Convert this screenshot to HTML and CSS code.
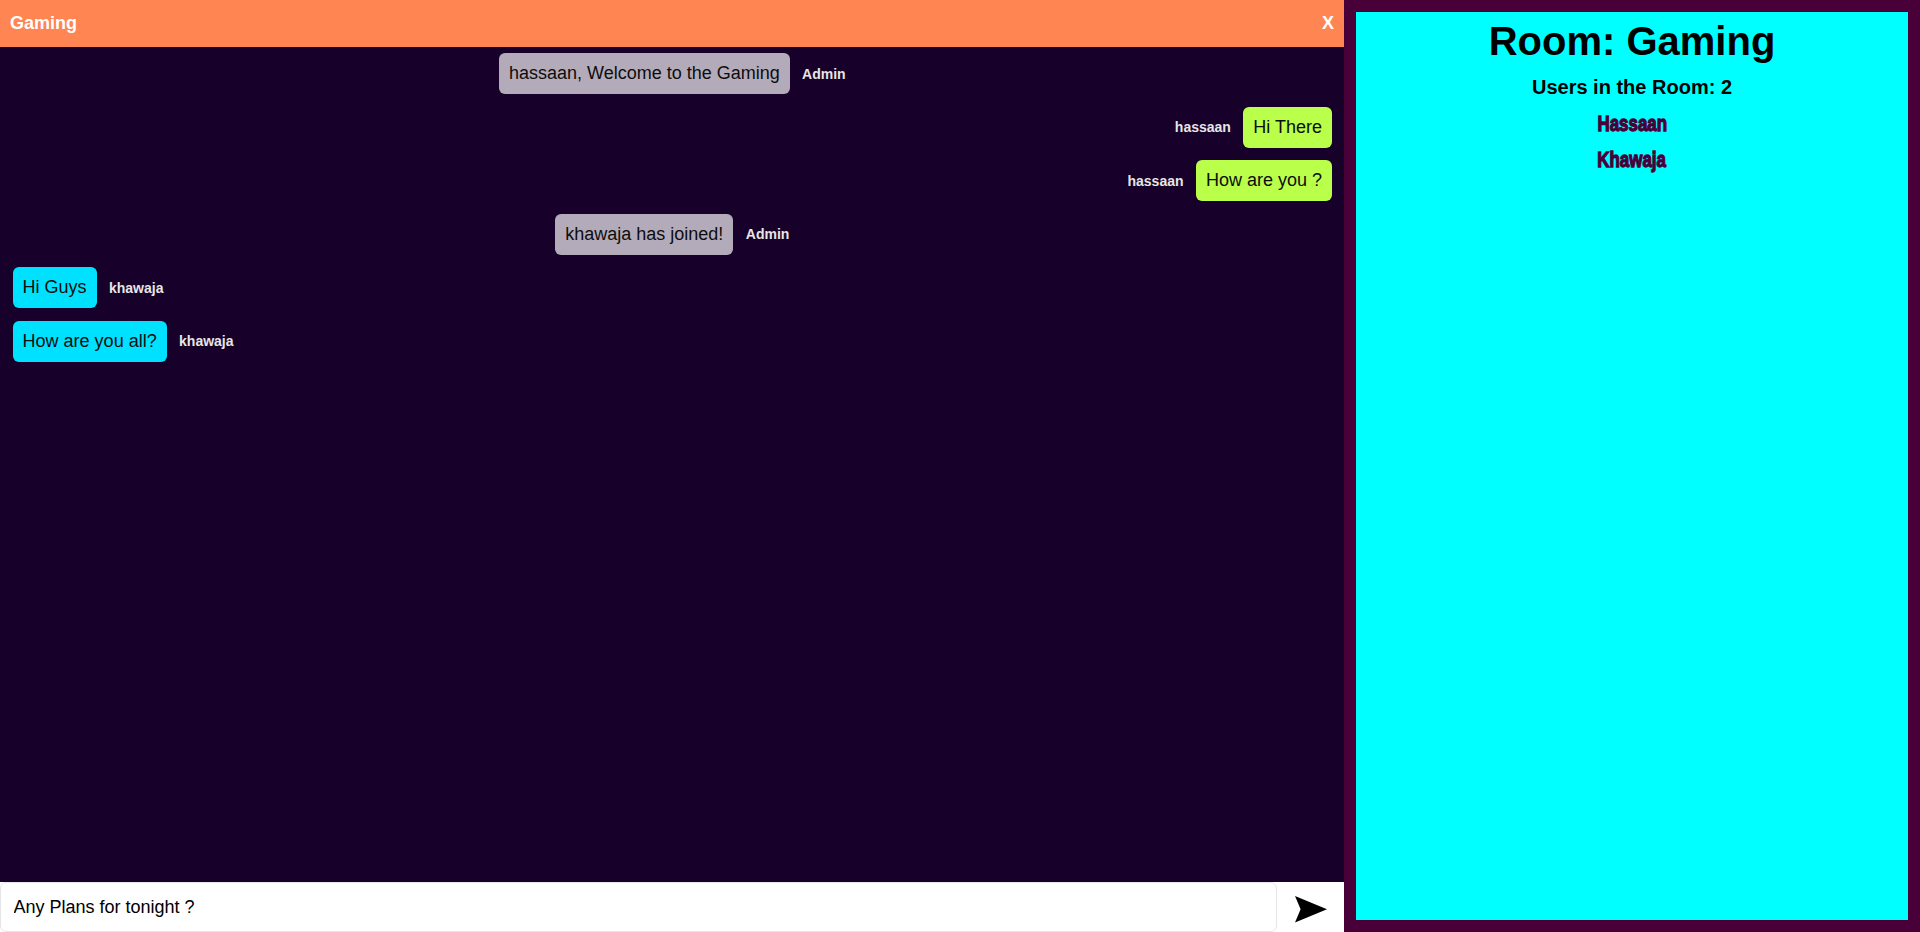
FILE: index.html
```html
<!DOCTYPE html>
<html lang="en">
<head>
<meta charset="utf-8">
<title>Chat Room</title>
<link rel="stylesheet" href="styles.css">
</head>
<body>
<div class="app">
  <main class="chat">
    <header class="chat-header"><span>Gaming</span><span class="close">X</span></header>
    <div class="messages">
      <div class="message center"><p class="bubble admin">hassaan, Welcome to the Gaming</p><span class="sender">Admin</span></div>
      <div class="message end"><span class="sender">hassaan</span><p class="bubble own">Hi There</p></div>
      <div class="message end"><span class="sender">hassaan</span><p class="bubble own">How are you ?</p></div>
      <div class="message center"><p class="bubble admin">khawaja has joined!</p><span class="sender">Admin</span></div>
      <div class="message"><p class="bubble other">Hi Guys</p><span class="sender">khawaja</span></div>
      <div class="message"><p class="bubble other">How are you all?</p><span class="sender">khawaja</span></div>
    </div>
    <form class="composer">
      <input class="composer-input" type="text" value="Any Plans for tonight ?">
      <button class="send" type="button" aria-label="Send">
        <svg width="32" height="27" viewBox="0 0 32 27"><path d="M0 0 32 13.2 0 26.5 5.6 13.2Z"/></svg>
      </button>
    </form>
  </main>
  <aside class="sidebar">
    <div class="panel">
      <h1 class="room">Room: Gaming</h1>
      <h2 class="count">Users in the Room: 2</h2>
      <p class="user">Hassaan</p>
      <p class="user">Khawaja</p>
    </div>
  </aside>
</div>
</body>
</html>
```
FILE: styles.css
```css
* { box-sizing: border-box; margin: 0; padding: 0; }
body { font-family: "Liberation Sans", Arial, sans-serif; }
.app { display: flex; height: 100vh; overflow: hidden; }
.chat { width: 70%; display: flex; flex-direction: column; background: #170029; }
.chat-header {
  display: flex; justify-content: space-between; align-items: center;
  height: 47px; padding: 0 10px;
  background: #ff8552; color: #fff; font-size: 18px; font-weight: bold;
}
.messages {
  flex: 1; display: flex; flex-direction: column; gap: 12.6px;
  padding: 6px 12px 6px 12.6px;
}
.message { display: flex; align-items: center; gap: 12.4px; }
.center { justify-content: center; }
.end { justify-content: flex-end; }
.bubble {
  height: 41px; padding: 10px; border-radius: 6px;
  font-size: 18px; line-height: 20px; color: #0d0d0d; white-space: nowrap;
}
.admin { background: #b4abba; }
.own { background: #baff49; }
.other { background: #00e1ff; }
.sender { font-size: 14px; font-weight: bold; color: #e6e6e6; }
.composer { display: flex; height: 50px; background: #fff; }
.composer-input {
  width: 1277px; padding: 0 12.5px; border: 1px solid #e6e6e6; border-radius: 6px;
  background: #fff; color: #000; font: 18px "Liberation Sans", Arial, sans-serif; outline: 0;
}
.send { flex: 1; padding: 4px 0 0 1px; border: 0; background: #fff; }
.send svg { display: block; margin: 0 auto; }
.sidebar { width: 30%; padding: 12px; background: #490039; }
.panel {
  height: 100%; padding-top: 6px; background: #00ffff; color: #000;
  display: flex; flex-direction: column; align-items: center;
}
.room { font-size: 40px; line-height: 46px; }
.count { margin-top: 12px; font-size: 20px; line-height: 23px; }
.user {
  height: 36px; font-size: 22px; line-height: 50px; font-weight: bold;
  color: #490039; -webkit-text-stroke: 1.3px #490039; transform: scaleX(.77);
}
```
